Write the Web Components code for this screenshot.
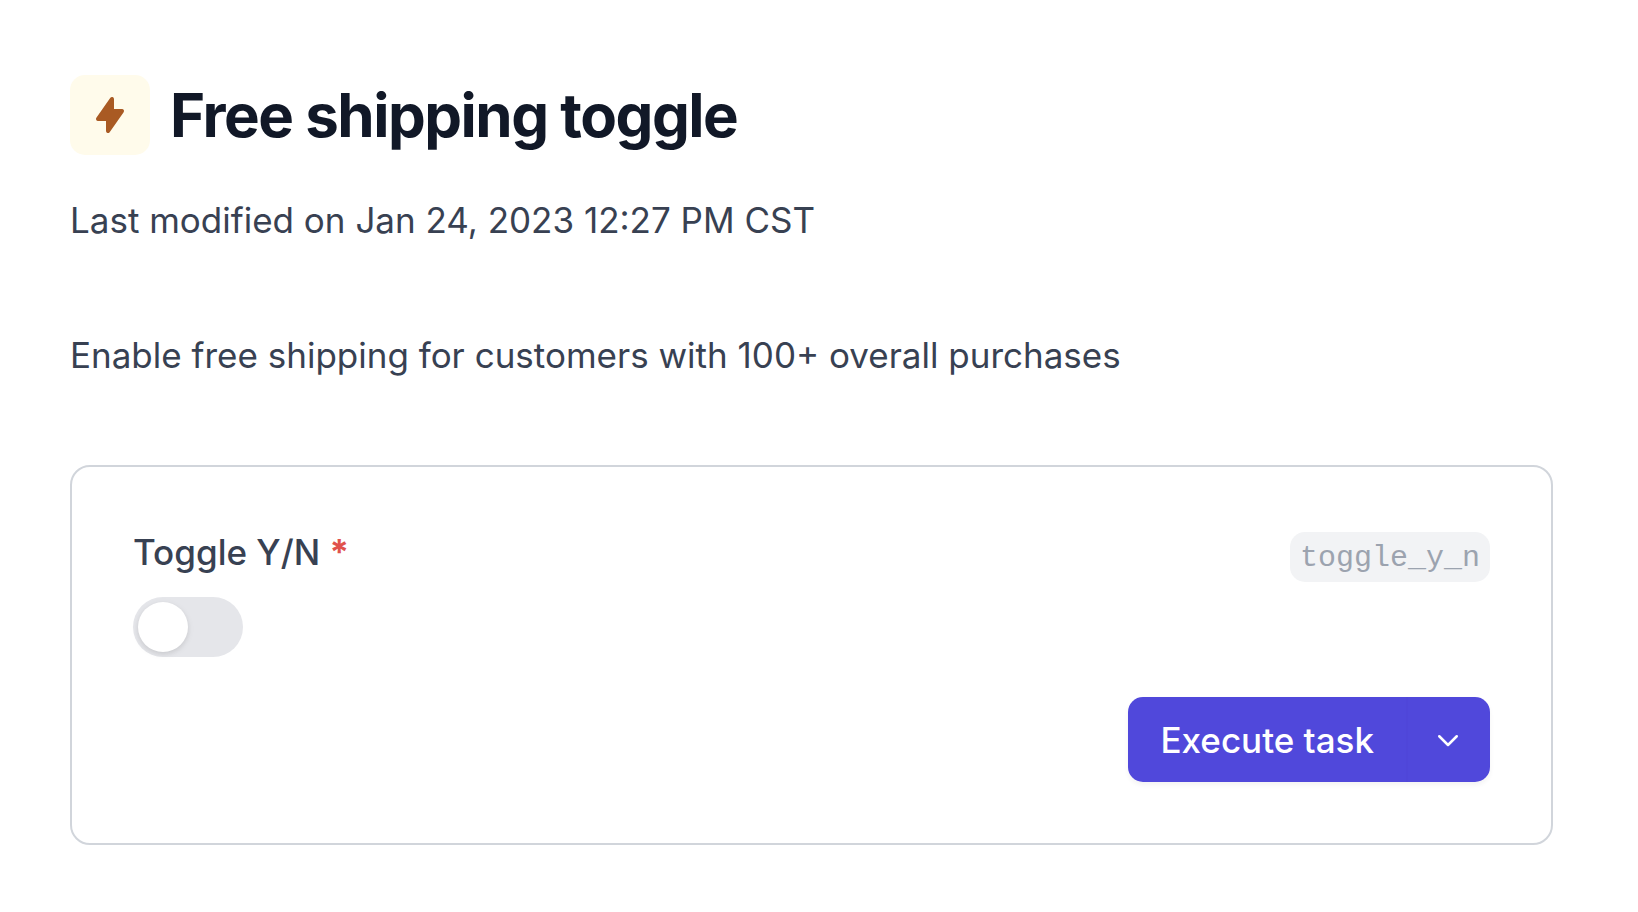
<!DOCTYPE html>
<html lang="en">
<head>
<meta charset="utf-8">
<meta name="viewport" content="width=device-width, initial-scale=1">
<title>Free shipping toggle</title>
<style>
  body { margin: 0; background: #fff; color: #384152; font: 400 35px/50px Inter, sans-serif; }
</style>
</head>
<body>
<task-page>
  <task-header slot="header">
    Free shipping toggle
    <span slot="meta">Last modified on Jan 24, 2023 12:27 PM CST</span>
  </task-header>
  <span slot="description">Enable free shipping for customers with 100+ overall purchases</span>
  <task-card>
    <toggle-field slug="toggle_y_n">Toggle Y/N</toggle-field>
    <split-button slot="actions">Execute task</split-button>
  </task-card>
</task-page>
<script>
  const define = (name, html, setup) => {
    const template = document.createElement('template');
    template.innerHTML = html;
    customElements.define(name, class extends HTMLElement {
      constructor() {
        super();
        this.attachShadow({ mode: 'open' }).append(template.content.cloneNode(true));
      }
      connectedCallback() { setup?.(this, this.shadowRoot); }
    });
  };

  define('task-page', `
    <style>
      :host { display: block; }
      main { padding: 75px 85px 67px 70px; }
      p { margin: 85px 0; }
    </style>
    <main>
      <slot name="header"></slot>
      <p><slot name="description"></slot></p>
      <slot></slot>
    </main>`);

  define('task-header', `
    <style>
      :host { display: block; }
      .title { display: flex; align-items: center; gap: 20px; }
      .icon { display: grid; place-items: center; flex: none; width: 80px; height: 80px; border-radius: 15px; background: #fffbeb; color: #a95a23; }
      h1 { margin: 0; color: #111827; font-size: 60px; line-height: 80px; font-weight: 700; letter-spacing: -0.025em; }
      p { margin: 40px 0 0; }
    </style>
    <header>
      <div class="title">
        <span class="icon">
          <svg width="40" height="40" viewBox="0 0 20 20" fill="currentColor" aria-hidden="true"><path fill-rule="evenodd" clip-rule="evenodd" d="M11.3 1.046A1 1 0 0112 2v5h4a1 1 0 01.82 1.573l-7 10A1 1 0 018 18v-5H4a1 1 0 01-.82-1.573l7-10a1 1 0 011.12-.38z"/></svg>
        </span>
        <h1><slot></slot></h1>
      </div>
      <p><slot name="meta"></slot></p>
    </header>`);

  define('task-card', `
    <style>
      :host { display: block; }
      form { display: flex; flex-direction: column; gap: 40px; padding: 65px 61px 61px; border: 2px solid #d1d5db; border-radius: 20px; }
      .actions { display: flex; justify-content: flex-end; }
    </style>
    <form>
      <slot></slot>
      <div class="actions"><slot name="actions"></slot></div>
    </form>`);

  define('toggle-field', `
    <style>
      :host { display: block; }
      .row { display: flex; justify-content: space-between; align-items: flex-start; margin-bottom: 15px; }
      label { font-weight: 500; line-height: 40px; }
      .required { color: #e0524c; font-weight: 700; }
      code { padding: 2px 10px 0; border-radius: 15px; background: #f2f3f5; color: #9ca3af; font: 30px/48px "Liberation Mono", monospace; }
      input { appearance: none; display: flex; box-sizing: border-box; width: 110px; height: 60px; margin: 0; padding: 5px; border-radius: 30px; background: #e5e6ea; cursor: pointer; }
      input::before { content: ""; width: 50px; height: 50px; border-radius: 50%; background: #fff; box-shadow: 0 2px 7px rgb(0 0 0 / 8%), 0 2px 4px rgb(0 0 0 / 5%); }
      input:checked { justify-content: flex-end; background: #5048db; }
    </style>
    <div class="row">
      <label for="toggle"><slot></slot> <span class="required">*</span></label>
      <code></code>
    </div>
    <input id="toggle" type="checkbox" role="switch" aria-required="true">`,
    (host, root) => { root.querySelector('code').textContent = host.getAttribute('slug'); });

  define('split-button', `
    <style>
      :host { display: flex; border-radius: 15px; box-shadow: 0 3px 5px rgb(0 0 0 / 5%); }
      button { display: grid; place-items: center; height: 85px; margin: 0; border: 0; background: #5048db; color: #fff; font: inherit; font-weight: 500; cursor: pointer; }
      .main { padding: 0 32px; border-radius: 15px 0 0 15px; }
      .more { width: 84px; border-left: 2px solid #4f46d9; padding: 0 2px 0 0; border-radius: 0 15px 15px 0; }
    </style>
    <button class="main" type="button"><slot></slot></button>
    <button class="more" type="button" aria-label="More options">
      <svg width="30" height="30" viewBox="0 0 24 24" fill="none" stroke="currentColor" stroke-width="2" stroke-linecap="round" stroke-linejoin="round" aria-hidden="true"><path d="M19 9l-7 7-7-7"/></svg>
    </button>`);
</script>
</body>
</html>
